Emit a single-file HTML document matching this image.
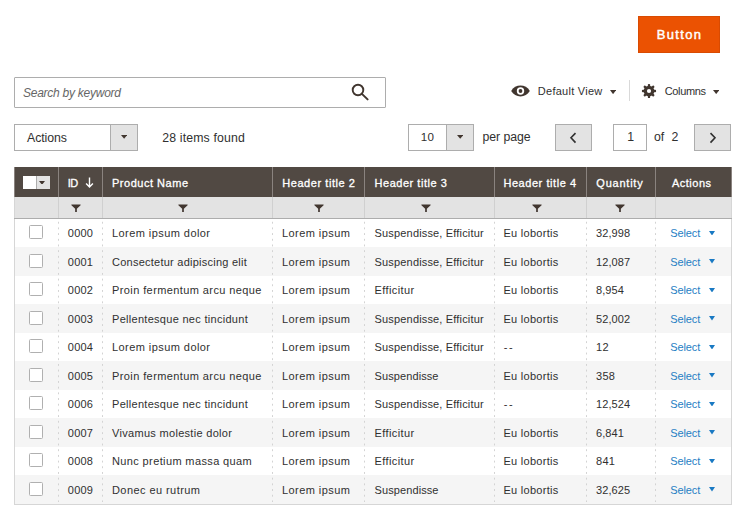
<!DOCTYPE html>
<html><head><meta charset="utf-8"><style>
html,body{margin:0;padding:0;background:#fff;}
body{width:750px;height:517px;position:relative;overflow:hidden;font-family:"Liberation Sans",sans-serif;}
.t{position:absolute;white-space:nowrap;line-height:1.117;}
</style></head><body>
<div style="position:absolute;left:638.3px;top:15.5px;width:82px;height:37px;box-sizing:border-box;background:#eb5202;border:1px solid #d94b02;"></div>
<div class="t" style="left:656.80px;top:27px;line-height:15px;font-size:13px;-webkit-text-stroke:0.45px #ffffff;letter-spacing:1.323px;color:#ffffff;">Button</div>
<div style="position:absolute;left:14px;top:77px;width:372px;height:31px;box-sizing:border-box;border:1px solid #adadad;border-radius:1px;background:#fff;"></div>
<div class="t" style="left:23.00px;top:86px;line-height:14px;font-size:12px;font-style:italic;letter-spacing:-0.253px;color:#666666;">Search by keyword</div>
<svg style="position:absolute;left:349px;top:81px" width="22" height="22" viewBox="0 0 22 22"><circle cx="9" cy="9" r="5.3" fill="none" stroke="#41362f" stroke-width="1.9"/><line x1="12.9" y1="12.9" x2="18.6" y2="18.4" stroke="#41362f" stroke-width="2" stroke-linecap="round"/></svg>
<svg style="position:absolute;left:510px;top:85px" width="22" height="12" viewBox="0 0 22 12"><path d="M1.2 6 C5 -1.2 16 -1.2 19.8 6 C16 13.2 5 13.2 1.2 6 Z" fill="#41362f"/><circle cx="10.5" cy="6" r="3.7" fill="#fff"/><circle cx="10.5" cy="6" r="1.9" fill="#41362f"/></svg>
<div class="t" style="left:537.80px;top:85px;line-height:12px;font-size:11px;letter-spacing:0.268px;color:#303030;">Default View</div>
<svg style="position:absolute;left:610.2px;top:89.9px" width="6.10" height="4.20" viewBox="0 0 10 6" preserveAspectRatio="none"><path d="M0 0 L10 0 L5 6 Z" fill="#41362f"/></svg>
<div style="position:absolute;left:629px;top:80px;width:1px;height:21px;background:#d9d9d9;"></div>
<svg style="position:absolute;left:641px;top:83px" width="16" height="16" viewBox="0 0 16 16"><g fill="#41362f" transform="translate(8 8)"><rect x="-1.15" y="-7.1" width="2.3" height="4" rx="0.9" transform="rotate(0)"/><rect x="-1.15" y="-7.1" width="2.3" height="4" rx="0.9" transform="rotate(45)"/><rect x="-1.15" y="-7.1" width="2.3" height="4" rx="0.9" transform="rotate(90)"/><rect x="-1.15" y="-7.1" width="2.3" height="4" rx="0.9" transform="rotate(135)"/><rect x="-1.15" y="-7.1" width="2.3" height="4" rx="0.9" transform="rotate(180)"/><rect x="-1.15" y="-7.1" width="2.3" height="4" rx="0.9" transform="rotate(225)"/><rect x="-1.15" y="-7.1" width="2.3" height="4" rx="0.9" transform="rotate(270)"/><rect x="-1.15" y="-7.1" width="2.3" height="4" rx="0.9" transform="rotate(315)"/><circle r="5.3"/></g><circle cx="8" cy="8" r="2.1" fill="#fff"/></svg>
<div class="t" style="left:664.70px;top:85px;line-height:12px;font-size:11px;letter-spacing:-0.351px;color:#303030;">Columns</div>
<svg style="position:absolute;left:712.7px;top:90px" width="6.30" height="4.10" viewBox="0 0 10 6" preserveAspectRatio="none"><path d="M0 0 L10 0 L5 6 Z" fill="#41362f"/></svg>
<div style="position:absolute;left:14px;top:124px;width:124px;height:26.5px;box-sizing:border-box;border:1px solid #adadad;background:#fff;"></div>
<div style="position:absolute;left:110px;top:124px;width:28px;height:26.5px;box-sizing:border-box;border:1px solid #adadad;background:#e3e3e3;"></div>
<div class="t" style="left:27.00px;top:131px;line-height:14px;font-size:12.3px;letter-spacing:-0.056px;color:#303030;">Actions</div>
<svg style="position:absolute;left:120.8px;top:135.3px" width="6.20" height="3.70" viewBox="0 0 10 6" preserveAspectRatio="none"><path d="M0 0 L10 0 L5 6 Z" fill="#41362f"/></svg>
<div class="t" style="left:162.30px;top:131px;line-height:14px;font-size:12.3px;letter-spacing:0.140px;color:#303030;">28 items found</div>
<div style="position:absolute;left:408px;top:124px;width:66px;height:26.5px;box-sizing:border-box;border:1px solid #adadad;background:#fff;"></div>
<div style="position:absolute;left:446px;top:124px;width:28px;height:26.5px;box-sizing:border-box;border:1px solid #adadad;background:#e3e3e3;"></div>
<div class="t" style="left:420.80px;top:131px;line-height:12px;font-size:11.6px;letter-spacing:0.200px;color:#303030;">10</div>
<svg style="position:absolute;left:456.6px;top:135.3px" width="6.40" height="3.70" viewBox="0 0 10 6" preserveAspectRatio="none"><path d="M0 0 L10 0 L5 6 Z" fill="#41362f"/></svg>
<div class="t" style="left:482.60px;top:130px;line-height:14px;font-size:12.3px;letter-spacing:-0.080px;color:#303030;">per page</div>
<div style="position:absolute;left:555px;top:124px;width:37px;height:26.5px;box-sizing:border-box;border:1px solid #adadad;background:#e3e3e3;"></div>
<svg style="position:absolute;left:568px;top:131.6px" width="10" height="12" viewBox="0 0 10 12"><path d="M7.5 1.1 L3 5.8 L7.5 10.6" fill="none" stroke="#303030" stroke-width="1.6"/></svg>
<div style="position:absolute;left:613px;top:124px;width:34px;height:26.5px;box-sizing:border-box;border:1px solid #adadad;background:#fff;"></div>
<div class="t" style="left:627.30px;top:130px;line-height:14px;font-size:12.3px;color:#303030;">1</div>
<div class="t" style="left:653.90px;top:130px;line-height:14px;font-size:12.3px;color:#303030;">of</div>
<div class="t" style="left:671.60px;top:130px;line-height:14px;font-size:12.3px;color:#303030;">2</div>
<div style="position:absolute;left:694px;top:124px;width:37px;height:26.5px;box-sizing:border-box;border:1px solid #adadad;background:#e3e3e3;"></div>
<svg style="position:absolute;left:708px;top:131.6px" width="10" height="12" viewBox="0 0 10 12"><path d="M2.5 1.1 L7 5.8 L2.5 10.6" fill="none" stroke="#303030" stroke-width="1.6"/></svg>
<div style="position:absolute;left:14px;top:167px;width:718px;height:30px;background:#514943;"></div>
<div style="position:absolute;left:58px;top:167px;width:1px;height:30px;background:#8a837f;"></div>
<div style="position:absolute;left:102px;top:167px;width:1px;height:30px;background:#8a837f;"></div>
<div style="position:absolute;left:272px;top:167px;width:1px;height:30px;background:#8a837f;"></div>
<div style="position:absolute;left:364px;top:167px;width:1px;height:30px;background:#8a837f;"></div>
<div style="position:absolute;left:494px;top:167px;width:1px;height:30px;background:#8a837f;"></div>
<div style="position:absolute;left:586px;top:167px;width:1px;height:30px;background:#8a837f;"></div>
<div style="position:absolute;left:655px;top:167px;width:1px;height:30px;background:#8a837f;"></div>
<div style="position:absolute;left:14px;top:167px;width:1px;height:30px;background:#8a837f;"></div>
<div style="position:absolute;left:731px;top:167px;width:1px;height:30px;background:#8a837f;"></div>
<div style="position:absolute;left:14px;top:197px;width:718px;height:21px;background:#e3e3e3;"></div>
<div style="position:absolute;left:58px;top:197px;width:1px;height:21px;background:#d0d0d0;"></div>
<div style="position:absolute;left:102px;top:197px;width:1px;height:21px;background:#d0d0d0;"></div>
<div style="position:absolute;left:272px;top:197px;width:1px;height:21px;background:#d0d0d0;"></div>
<div style="position:absolute;left:364px;top:197px;width:1px;height:21px;background:#d0d0d0;"></div>
<div style="position:absolute;left:494px;top:197px;width:1px;height:21px;background:#d0d0d0;"></div>
<div style="position:absolute;left:586px;top:197px;width:1px;height:21px;background:#d0d0d0;"></div>
<div style="position:absolute;left:655px;top:197px;width:1px;height:21px;background:#d0d0d0;"></div>
<div style="position:absolute;left:14px;top:197px;width:1px;height:308px;background:#d6d6d6;"></div>
<div style="position:absolute;left:731px;top:197px;width:1px;height:308px;background:#d6d6d6;"></div>
<div style="position:absolute;left:14px;top:218px;width:718px;height:1px;background:#adadad;"></div>
<div style="position:absolute;left:15px;top:247.0px;width:716px;height:28.5px;background:#f5f5f5;"></div>
<div style="position:absolute;left:15px;top:304.0px;width:716px;height:28.5px;background:#f5f5f5;"></div>
<div style="position:absolute;left:15px;top:361.0px;width:716px;height:28.5px;background:#f5f5f5;"></div>
<div style="position:absolute;left:15px;top:418.0px;width:716px;height:28.5px;background:#f5f5f5;"></div>
<div style="position:absolute;left:15px;top:475.0px;width:716px;height:28.5px;background:#f5f5f5;"></div>
<div style="position:absolute;left:58px;top:218.5px;width:1px;height:283.0px;background-image:linear-gradient(#d3d3d3 0 1.5px, transparent 1.5px);background-size:1px 5.7px;background-position:0 2.75px;"></div>
<div style="position:absolute;left:102px;top:218.5px;width:1px;height:283.0px;background-image:linear-gradient(#d3d3d3 0 1.5px, transparent 1.5px);background-size:1px 5.7px;background-position:0 2.75px;"></div>
<div style="position:absolute;left:272px;top:218.5px;width:1px;height:283.0px;background-image:linear-gradient(#d3d3d3 0 1.5px, transparent 1.5px);background-size:1px 5.7px;background-position:0 2.75px;"></div>
<div style="position:absolute;left:364px;top:218.5px;width:1px;height:283.0px;background-image:linear-gradient(#d3d3d3 0 1.5px, transparent 1.5px);background-size:1px 5.7px;background-position:0 2.75px;"></div>
<div style="position:absolute;left:494px;top:218.5px;width:1px;height:283.0px;background-image:linear-gradient(#d3d3d3 0 1.5px, transparent 1.5px);background-size:1px 5.7px;background-position:0 2.75px;"></div>
<div style="position:absolute;left:586px;top:218.5px;width:1px;height:283.0px;background-image:linear-gradient(#d3d3d3 0 1.5px, transparent 1.5px);background-size:1px 5.7px;background-position:0 2.75px;"></div>
<div style="position:absolute;left:655px;top:218.5px;width:1px;height:283.0px;background-image:linear-gradient(#d3d3d3 0 1.5px, transparent 1.5px);background-size:1px 5.7px;background-position:0 2.75px;"></div>
<div style="position:absolute;left:14px;top:504px;width:718px;height:1px;background:#d6d6d6;"></div>
<div style="position:absolute;left:29px;top:225.1px;width:14px;height:14px;box-sizing:border-box;border:1px solid #b0b0b0;border-radius:1.5px;background:#fff;"></div>
<div class="t" style="left:67.80px;top:227px;line-height:12px;font-size:11px;letter-spacing:0.229px;color:#303030;">0000</div>
<div class="t" style="left:112.00px;top:227px;line-height:12px;font-size:11px;letter-spacing:0.433px;color:#303030;">Lorem ipsum dolor</div>
<div class="t" style="left:282.00px;top:227px;line-height:12px;font-size:11px;letter-spacing:0.429px;color:#303030;">Lorem ipsum</div>
<div class="t" style="left:374.60px;top:227px;line-height:12px;font-size:11px;letter-spacing:0.163px;color:#303030;">Suspendisse, Efficitur</div>
<div class="t" style="left:503.40px;top:227px;line-height:12px;font-size:11px;letter-spacing:0.297px;color:#303030;">Eu lobortis</div>
<div class="t" style="left:596.00px;top:227px;line-height:12px;font-size:11px;letter-spacing:0.111px;color:#303030;">32,998</div>
<div class="t" style="left:670.30px;top:227px;line-height:12px;font-size:11px;letter-spacing:-0.114px;color:#2680c4;">Select</div>
<svg style="position:absolute;left:708.8px;top:230.9px" width="6.00" height="4.50" viewBox="0 0 10 6" preserveAspectRatio="none"><path d="M0 0 L10 0 L5 6 Z" fill="#1979c3"/></svg>
<div style="position:absolute;left:29px;top:253.6px;width:14px;height:14px;box-sizing:border-box;border:1px solid #b0b0b0;border-radius:1.5px;background:#fff;"></div>
<div class="t" style="left:67.80px;top:256px;line-height:12px;font-size:11px;letter-spacing:0.229px;color:#303030;">0001</div>
<div class="t" style="left:112.00px;top:256px;line-height:12px;font-size:11px;letter-spacing:0.243px;color:#303030;">Consectetur adipiscing elit</div>
<div class="t" style="left:282.00px;top:256px;line-height:12px;font-size:11px;letter-spacing:0.429px;color:#303030;">Lorem ipsum</div>
<div class="t" style="left:374.60px;top:256px;line-height:12px;font-size:11px;letter-spacing:0.163px;color:#303030;">Suspendisse, Efficitur</div>
<div class="t" style="left:503.40px;top:256px;line-height:12px;font-size:11px;letter-spacing:0.297px;color:#303030;">Eu lobortis</div>
<div class="t" style="left:596.00px;top:256px;line-height:12px;font-size:11px;letter-spacing:0.111px;color:#303030;">12,087</div>
<div class="t" style="left:670.30px;top:256px;line-height:12px;font-size:11px;letter-spacing:-0.114px;color:#2680c4;">Select</div>
<svg style="position:absolute;left:708.8px;top:259.4px" width="6.00" height="4.50" viewBox="0 0 10 6" preserveAspectRatio="none"><path d="M0 0 L10 0 L5 6 Z" fill="#1979c3"/></svg>
<div style="position:absolute;left:29px;top:282.1px;width:14px;height:14px;box-sizing:border-box;border:1px solid #b0b0b0;border-radius:1.5px;background:#fff;"></div>
<div class="t" style="left:67.80px;top:284px;line-height:12px;font-size:11px;letter-spacing:0.229px;color:#303030;">0002</div>
<div class="t" style="left:112.00px;top:284px;line-height:12px;font-size:11px;letter-spacing:0.402px;color:#303030;">Proin fermentum arcu neque</div>
<div class="t" style="left:282.00px;top:284px;line-height:12px;font-size:11px;letter-spacing:0.429px;color:#303030;">Lorem ipsum</div>
<div class="t" style="left:374.60px;top:284px;line-height:12px;font-size:11px;letter-spacing:0.378px;color:#303030;">Efficitur</div>
<div class="t" style="left:503.40px;top:284px;line-height:12px;font-size:11px;letter-spacing:0.297px;color:#303030;">Eu lobortis</div>
<div class="t" style="left:596.00px;top:284px;line-height:12px;font-size:11px;letter-spacing:0.095px;color:#303030;">8,954</div>
<div class="t" style="left:670.30px;top:284px;line-height:12px;font-size:11px;letter-spacing:-0.114px;color:#2680c4;">Select</div>
<svg style="position:absolute;left:708.8px;top:287.9px" width="6.00" height="4.50" viewBox="0 0 10 6" preserveAspectRatio="none"><path d="M0 0 L10 0 L5 6 Z" fill="#1979c3"/></svg>
<div style="position:absolute;left:29px;top:310.6px;width:14px;height:14px;box-sizing:border-box;border:1px solid #b0b0b0;border-radius:1.5px;background:#fff;"></div>
<div class="t" style="left:67.80px;top:313px;line-height:12px;font-size:11px;letter-spacing:0.229px;color:#303030;">0003</div>
<div class="t" style="left:112.00px;top:313px;line-height:12px;font-size:11px;letter-spacing:0.291px;color:#303030;">Pellentesque nec tincidunt</div>
<div class="t" style="left:282.00px;top:313px;line-height:12px;font-size:11px;letter-spacing:0.429px;color:#303030;">Lorem ipsum</div>
<div class="t" style="left:374.60px;top:313px;line-height:12px;font-size:11px;letter-spacing:0.163px;color:#303030;">Suspendisse, Efficitur</div>
<div class="t" style="left:503.40px;top:313px;line-height:12px;font-size:11px;letter-spacing:0.297px;color:#303030;">Eu lobortis</div>
<div class="t" style="left:596.00px;top:313px;line-height:12px;font-size:11px;letter-spacing:0.111px;color:#303030;">52,002</div>
<div class="t" style="left:670.30px;top:313px;line-height:12px;font-size:11px;letter-spacing:-0.114px;color:#2680c4;">Select</div>
<svg style="position:absolute;left:708.8px;top:316.4px" width="6.00" height="4.50" viewBox="0 0 10 6" preserveAspectRatio="none"><path d="M0 0 L10 0 L5 6 Z" fill="#1979c3"/></svg>
<div style="position:absolute;left:29px;top:339.1px;width:14px;height:14px;box-sizing:border-box;border:1px solid #b0b0b0;border-radius:1.5px;background:#fff;"></div>
<div class="t" style="left:67.80px;top:341px;line-height:12px;font-size:11px;letter-spacing:0.229px;color:#303030;">0004</div>
<div class="t" style="left:112.00px;top:341px;line-height:12px;font-size:11px;letter-spacing:0.433px;color:#303030;">Lorem ipsum dolor</div>
<div class="t" style="left:282.00px;top:341px;line-height:12px;font-size:11px;letter-spacing:0.429px;color:#303030;">Lorem ipsum</div>
<div class="t" style="left:374.60px;top:341px;line-height:12px;font-size:11px;letter-spacing:0.163px;color:#303030;">Suspendisse, Efficitur</div>
<div class="t" style="left:503.80px;top:341px;line-height:12px;font-size:11px;letter-spacing:1.600px;color:#303030;">--</div>
<div class="t" style="left:596.00px;top:341px;line-height:12px;font-size:11px;letter-spacing:0.344px;color:#303030;">12</div>
<div class="t" style="left:670.30px;top:341px;line-height:12px;font-size:11px;letter-spacing:-0.114px;color:#2680c4;">Select</div>
<svg style="position:absolute;left:708.8px;top:344.9px" width="6.00" height="4.50" viewBox="0 0 10 6" preserveAspectRatio="none"><path d="M0 0 L10 0 L5 6 Z" fill="#1979c3"/></svg>
<div style="position:absolute;left:29px;top:367.6px;width:14px;height:14px;box-sizing:border-box;border:1px solid #b0b0b0;border-radius:1.5px;background:#fff;"></div>
<div class="t" style="left:67.80px;top:370px;line-height:12px;font-size:11px;letter-spacing:0.229px;color:#303030;">0005</div>
<div class="t" style="left:112.00px;top:370px;line-height:12px;font-size:11px;letter-spacing:0.402px;color:#303030;">Proin fermentum arcu neque</div>
<div class="t" style="left:282.00px;top:370px;line-height:12px;font-size:11px;letter-spacing:0.429px;color:#303030;">Lorem ipsum</div>
<div class="t" style="left:374.60px;top:370px;line-height:12px;font-size:11px;letter-spacing:0.090px;color:#303030;">Suspendisse</div>
<div class="t" style="left:503.40px;top:370px;line-height:12px;font-size:11px;letter-spacing:0.297px;color:#303030;">Eu lobortis</div>
<div class="t" style="left:596.00px;top:370px;line-height:12px;font-size:11px;letter-spacing:0.258px;color:#303030;">358</div>
<div class="t" style="left:670.30px;top:370px;line-height:12px;font-size:11px;letter-spacing:-0.114px;color:#2680c4;">Select</div>
<svg style="position:absolute;left:708.8px;top:373.4px" width="6.00" height="4.50" viewBox="0 0 10 6" preserveAspectRatio="none"><path d="M0 0 L10 0 L5 6 Z" fill="#1979c3"/></svg>
<div style="position:absolute;left:29px;top:396.1px;width:14px;height:14px;box-sizing:border-box;border:1px solid #b0b0b0;border-radius:1.5px;background:#fff;"></div>
<div class="t" style="left:67.80px;top:398px;line-height:12px;font-size:11px;letter-spacing:0.229px;color:#303030;">0006</div>
<div class="t" style="left:112.00px;top:398px;line-height:12px;font-size:11px;letter-spacing:0.291px;color:#303030;">Pellentesque nec tincidunt</div>
<div class="t" style="left:282.00px;top:398px;line-height:12px;font-size:11px;letter-spacing:0.429px;color:#303030;">Lorem ipsum</div>
<div class="t" style="left:374.60px;top:398px;line-height:12px;font-size:11px;letter-spacing:0.163px;color:#303030;">Suspendisse, Efficitur</div>
<div class="t" style="left:503.80px;top:398px;line-height:12px;font-size:11px;letter-spacing:1.600px;color:#303030;">--</div>
<div class="t" style="left:596.00px;top:398px;line-height:12px;font-size:11px;letter-spacing:0.111px;color:#303030;">12,524</div>
<div class="t" style="left:670.30px;top:398px;line-height:12px;font-size:11px;letter-spacing:-0.114px;color:#2680c4;">Select</div>
<svg style="position:absolute;left:708.8px;top:401.9px" width="6.00" height="4.50" viewBox="0 0 10 6" preserveAspectRatio="none"><path d="M0 0 L10 0 L5 6 Z" fill="#1979c3"/></svg>
<div style="position:absolute;left:29px;top:424.6px;width:14px;height:14px;box-sizing:border-box;border:1px solid #b0b0b0;border-radius:1.5px;background:#fff;"></div>
<div class="t" style="left:67.80px;top:427px;line-height:12px;font-size:11px;letter-spacing:0.229px;color:#303030;">0007</div>
<div class="t" style="left:112.00px;top:427px;line-height:12px;font-size:11px;letter-spacing:0.306px;color:#303030;">Vivamus molestie dolor</div>
<div class="t" style="left:282.00px;top:427px;line-height:12px;font-size:11px;letter-spacing:0.429px;color:#303030;">Lorem ipsum</div>
<div class="t" style="left:374.60px;top:427px;line-height:12px;font-size:11px;letter-spacing:0.378px;color:#303030;">Efficitur</div>
<div class="t" style="left:503.40px;top:427px;line-height:12px;font-size:11px;letter-spacing:0.297px;color:#303030;">Eu lobortis</div>
<div class="t" style="left:596.00px;top:427px;line-height:12px;font-size:11px;letter-spacing:0.095px;color:#303030;">6,841</div>
<div class="t" style="left:670.30px;top:427px;line-height:12px;font-size:11px;letter-spacing:-0.114px;color:#2680c4;">Select</div>
<svg style="position:absolute;left:708.8px;top:430.4px" width="6.00" height="4.50" viewBox="0 0 10 6" preserveAspectRatio="none"><path d="M0 0 L10 0 L5 6 Z" fill="#1979c3"/></svg>
<div style="position:absolute;left:29px;top:453.1px;width:14px;height:14px;box-sizing:border-box;border:1px solid #b0b0b0;border-radius:1.5px;background:#fff;"></div>
<div class="t" style="left:67.80px;top:455px;line-height:12px;font-size:11px;letter-spacing:0.229px;color:#303030;">0008</div>
<div class="t" style="left:112.00px;top:455px;line-height:12px;font-size:11px;letter-spacing:0.377px;color:#303030;">Nunc pretium massa quam</div>
<div class="t" style="left:282.00px;top:455px;line-height:12px;font-size:11px;letter-spacing:0.429px;color:#303030;">Lorem ipsum</div>
<div class="t" style="left:374.60px;top:455px;line-height:12px;font-size:11px;letter-spacing:0.378px;color:#303030;">Efficitur</div>
<div class="t" style="left:503.40px;top:455px;line-height:12px;font-size:11px;letter-spacing:0.297px;color:#303030;">Eu lobortis</div>
<div class="t" style="left:596.00px;top:455px;line-height:12px;font-size:11px;letter-spacing:0.258px;color:#303030;">841</div>
<div class="t" style="left:670.30px;top:455px;line-height:12px;font-size:11px;letter-spacing:-0.114px;color:#2680c4;">Select</div>
<svg style="position:absolute;left:708.8px;top:458.9px" width="6.00" height="4.50" viewBox="0 0 10 6" preserveAspectRatio="none"><path d="M0 0 L10 0 L5 6 Z" fill="#1979c3"/></svg>
<div style="position:absolute;left:29px;top:481.6px;width:14px;height:14px;box-sizing:border-box;border:1px solid #b0b0b0;border-radius:1.5px;background:#fff;"></div>
<div class="t" style="left:67.80px;top:484px;line-height:12px;font-size:11px;letter-spacing:0.229px;color:#303030;">0009</div>
<div class="t" style="left:112.00px;top:484px;line-height:12px;font-size:11px;letter-spacing:0.429px;color:#303030;">Donec eu rutrum</div>
<div class="t" style="left:282.00px;top:484px;line-height:12px;font-size:11px;letter-spacing:0.429px;color:#303030;">Lorem ipsum</div>
<div class="t" style="left:374.60px;top:484px;line-height:12px;font-size:11px;letter-spacing:0.090px;color:#303030;">Suspendisse</div>
<div class="t" style="left:503.40px;top:484px;line-height:12px;font-size:11px;letter-spacing:0.297px;color:#303030;">Eu lobortis</div>
<div class="t" style="left:596.00px;top:484px;line-height:12px;font-size:11px;letter-spacing:0.111px;color:#303030;">32,625</div>
<div class="t" style="left:670.30px;top:484px;line-height:12px;font-size:11px;letter-spacing:-0.114px;color:#2680c4;">Select</div>
<svg style="position:absolute;left:708.8px;top:487.4px" width="6.00" height="4.50" viewBox="0 0 10 6" preserveAspectRatio="none"><path d="M0 0 L10 0 L5 6 Z" fill="#1979c3"/></svg>
<div class="t" style="left:67.80px;top:177px;line-height:12px;font-size:11px;-webkit-text-stroke:0.3px #fff;letter-spacing:-0.500px;color:#fff;">ID</div>
<svg style="position:absolute;left:85px;top:176.5px" width="9" height="12" viewBox="0 0 9 12"><path d="M4.5 0.4 V10 M1.1 6.6 L4.5 10.1 L7.9 6.6" fill="none" stroke="#fff" stroke-width="1.4"/></svg>
<div class="t" style="left:112.00px;top:177px;line-height:12px;font-size:11px;-webkit-text-stroke:0.3px #fff;letter-spacing:0.517px;color:#fff;">Product Name</div>
<div class="t" style="left:282.20px;top:177px;line-height:12px;font-size:11px;-webkit-text-stroke:0.3px #fff;letter-spacing:0.567px;color:#fff;">Header title 2</div>
<div class="t" style="left:374.60px;top:177px;line-height:12px;font-size:11px;-webkit-text-stroke:0.3px #fff;letter-spacing:0.521px;color:#fff;">Header title 3</div>
<div class="t" style="left:503.40px;top:177px;line-height:12px;font-size:11px;-webkit-text-stroke:0.3px #fff;letter-spacing:0.560px;color:#fff;">Header title 4</div>
<div class="t" style="left:596.30px;top:177px;line-height:12px;font-size:11px;-webkit-text-stroke:0.3px #fff;letter-spacing:0.776px;color:#fff;">Quantity</div>
<div class="t" style="left:671.90px;top:177px;line-height:12px;font-size:11px;-webkit-text-stroke:0.3px #fff;letter-spacing:0.521px;color:#fff;">Actions</div>
<div style="position:absolute;left:22.8px;top:175.8px;width:26.8px;height:13.6px;box-sizing:border-box;background:#fff;"></div>
<div style="position:absolute;left:36px;top:175.8px;width:13.6px;height:13.6px;box-sizing:border-box;border-left:1px solid #adadad;background:#e3e3e3;"></div>
<svg style="position:absolute;left:39.4px;top:180.6px" width="6.00" height="3.80" viewBox="0 0 10 6" preserveAspectRatio="none"><path d="M0 0 L10 0 L5 6 Z" fill="#41362f"/></svg>
<svg style="position:absolute;left:71.1px;top:203.5px" width="10" height="9" viewBox="0 0 10 9"><path d="M0.4 0.4 H9.6 V1.2 L5.85 4.7 V8 H4.15 V4.7 L0.4 1.2 Z" fill="#41362f"/></svg>
<svg style="position:absolute;left:177.6px;top:203.5px" width="10" height="9" viewBox="0 0 10 9"><path d="M0.4 0.4 H9.6 V1.2 L5.85 4.7 V8 H4.15 V4.7 L0.4 1.2 Z" fill="#41362f"/></svg>
<svg style="position:absolute;left:314.1px;top:203.5px" width="10" height="9" viewBox="0 0 10 9"><path d="M0.4 0.4 H9.6 V1.2 L5.85 4.7 V8 H4.15 V4.7 L0.4 1.2 Z" fill="#41362f"/></svg>
<svg style="position:absolute;left:420.90000000000003px;top:203.5px" width="10" height="9" viewBox="0 0 10 9"><path d="M0.4 0.4 H9.6 V1.2 L5.85 4.7 V8 H4.15 V4.7 L0.4 1.2 Z" fill="#41362f"/></svg>
<svg style="position:absolute;left:532.2px;top:203.5px" width="10" height="9" viewBox="0 0 10 9"><path d="M0.4 0.4 H9.6 V1.2 L5.85 4.7 V8 H4.15 V4.7 L0.4 1.2 Z" fill="#41362f"/></svg>
<svg style="position:absolute;left:615.0px;top:203.5px" width="10" height="9" viewBox="0 0 10 9"><path d="M0.4 0.4 H9.6 V1.2 L5.85 4.7 V8 H4.15 V4.7 L0.4 1.2 Z" fill="#41362f"/></svg>
</body></html>
